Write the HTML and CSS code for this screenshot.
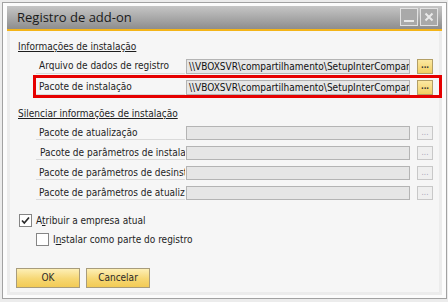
FILE: index.html
```html
<!DOCTYPE html>
<html lang="pt">
<head>
<meta charset="utf-8">
<title>Registro de add-on</title>
<link rel="stylesheet" href="styles.css">
</head>
<body>
<div class="window">
  <div class="titlebar">
    <span class="title">Registro de add-on</span>
    <div class="tbtns">
      <span class="tbtn"><svg width="16" height="16" viewBox="0 0 16 16"><rect x="3" y="11" width="10" height="2" fill="#e9e9e9"/></svg></span>
      <span class="tbtn"><svg width="16" height="16" viewBox="0 0 16 16"><path d="M4.5 4.5 L11.5 11.5 M11.5 4.5 L4.5 11.5" stroke="#e9e9e9" stroke-width="2"/></svg></span>
    </div>
  </div>
  <div class="content">
    <div class="section-title">Informações de instalação</div>
    <div class="rows rows-main">
      <div class="row">
        <div class="label">Arquivo de dados de registro</div>
        <div class="field">\\VBOXSVR\compartilhamento\SetupInterCompany.ard</div>
        <div class="browse">...</div>
      </div>
      <div class="row row-marked">
        <div class="label">Pacote de instalação</div>
        <div class="field">\\VBOXSVR\compartilhamento\SetupInterCompany.exe</div>
        <div class="browse">...</div>
      </div>
    </div>
    <div class="section-title section-two">Silenciar informações de instalação</div>
    <div class="rows rows-silent">
      <div class="row">
        <div class="label">Pacote de atualização</div>
        <div class="field"></div>
        <div class="browse disabled">...</div>
      </div>
      <div class="row">
        <div class="label label-b">Pacote de parâmetros de instalação</div>
        <div class="field"></div>
        <div class="browse disabled">...</div>
      </div>
      <div class="row">
        <div class="label">Pacote de parâmetros de desinstalação</div>
        <div class="field"></div>
        <div class="browse disabled">...</div>
      </div>
      <div class="row">
        <div class="label">Pacote de parâmetros de atualização</div>
        <div class="field"></div>
        <div class="browse disabled">...</div>
      </div>
    </div>
    <div class="check-row check-one">
      <span class="checkbox"><svg width="11" height="11" viewBox="0 0 11 11"><path d="M2 5.5 L4.3 8 L9 2.5" fill="none" stroke="#2a2a2a" stroke-width="1.7"/></svg></span>
      <span>A<u>t</u>ribuir a empresa atual</span>
    </div>
    <div class="check-row check-two">
      <span class="checkbox"></span>
      <span>I<u>n</u>stalar como parte do registro</span>
    </div>
    <div class="actions">
      <span class="btn">OK</span>
      <span class="btn">Cancelar</span>
    </div>
  </div>
</div>
</body>
</html>
```
FILE: styles.css
```css
body {
  margin: 0;
  background: #ececec;
  font-family: "DejaVu Sans Condensed", "DejaVu Sans", sans-serif;
  font-size: 10px;
  color: #1e1e1e;
}

.window {
  box-sizing: border-box;
  margin: 2px 0 0 2px;
  width: 445px;
  height: 297px;
  border: 1px solid #a2a2a2;
  background: #fcfcfc;
  padding: 3px 4px;
  display: flex;
  flex-direction: column;
}

.titlebar {
  height: 23px;
  border-bottom: 2px solid #f4b418;
  background: linear-gradient(#c6c6c6, #8d8d8d);
  display: flex;
  align-items: flex-start;
  justify-content: space-between;
  padding: 0 4px 0 10px;
}

.title {
  font-family: "Open Sans", sans-serif;
  font-size: 13px;
  line-height: 23px;
  color: #1a1a1a;
}

.tbtns {
  display: flex;
  gap: 2px;
  margin-top: 2px;
}

.tbtn {
  width: 18px;
  height: 18px;
  box-sizing: border-box;
  border: 1px solid #e2e2e2;
  background: #a9a9a9;
  display: flex;
}

.content {
  flex: 1;
  border: 3px solid #ececec;
  border-top: 0;
  background: #f6f6f6;
  padding: 9px 0 0 8px;
}

.section-title {
  line-height: 14px;
  text-decoration: underline;
  text-underline-offset: 1px;
}

.section-two {
  margin-top: 12px;
}

.rows {
  margin-left: 18px;
  margin-top: 5px;
  display: flex;
  flex-direction: column;
}

.row {
  display: flex;
  height: 15px;
}

.rows-main .row-marked {
  margin-top: 4px;
  padding-top: 2px;
  outline: 3px solid #e60000;
}

.rows-silent {
  gap: 6px;
}

.rows-silent .row {
  height: 14px;
}

.label {
  width: 149px;
  box-sizing: border-box;
  padding-left: 3px;
  border-bottom: 1px solid #dadada;
  white-space: nowrap;
  overflow: hidden;
  line-height: 14px;
}

.label-b {
  padding-left: 4px;
}

.field {
  width: 224px;
  margin-left: 1px;
  box-sizing: border-box;
  border: 1px solid #b4b4b4;
  background: #e6e6e6;
  padding-left: 2px;
  white-space: nowrap;
  overflow: hidden;
  line-height: 13px;
  color: #111;
}

.browse {
  width: 16px;
  margin-left: 7px;
  box-sizing: border-box;
  border: 1px solid #b39f66;
  background: linear-gradient(#fbe8a2, #f2cf62);
  text-align: center;
  line-height: 12px;
  font-size: 8px;
  font-weight: bold;
  overflow: hidden;
  color: #333;
}

.browse.disabled {
  border-color: #c8c8c8;
  background: #efefef;
  color: #a7a4b8;
  font-weight: normal;
}

.check-row {
  display: flex;
  align-items: center;
  height: 14px;
  gap: 4px;
}

.check-one {
  margin-top: 13px;
  margin-left: 1px;
}

.check-two {
  margin-top: 5px;
  margin-left: 18px;
}

.checkbox {
  width: 13px;
  height: 13px;
  box-sizing: border-box;
  border: 1px solid #858585;
  background: #fff;
  display: flex;
  align-items: center;
  justify-content: center;
}

.actions {
  display: flex;
  gap: 6px;
  margin-top: 22px;
  margin-left: -2px;
}

.btn {
  width: 64px;
  height: 20px;
  box-sizing: border-box;
  border: 1px solid #a89c7c;
  background: linear-gradient(#fdefb6, #f6d773 55%, #f2cb55);
  text-align: center;
  line-height: 18px;
  color: #2a2a2a;
}
```
